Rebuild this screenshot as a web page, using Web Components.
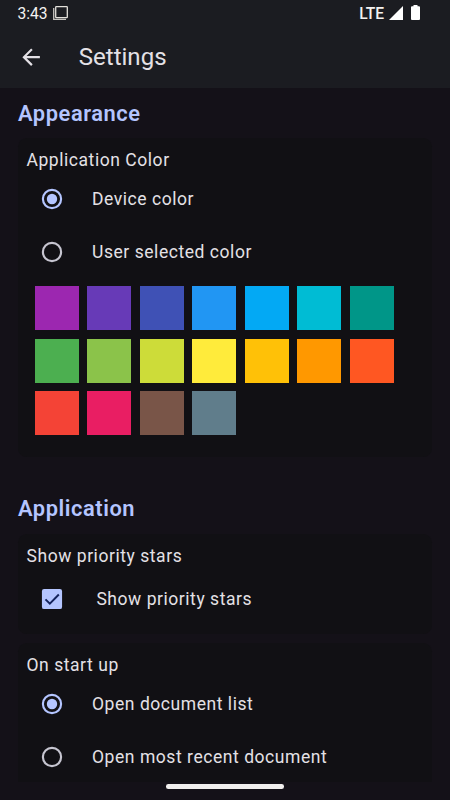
<!DOCTYPE html>
<html lang="en">
<head>
<meta charset="utf-8">
<title>Settings</title>
<style>
  body {
    margin: 0;
    background: #141118;
    color: #e4e1e6;
    font-family: Roboto, sans-serif;
    overflow: hidden;
  }
</style>
</head>
<body>
  <settings-screen>
    <status-bar slot="top" time="3:43" network="LTE"></status-bar>
    <app-bar slot="top">Settings</app-bar>

    <settings-section name="Appearance">
      <settings-card name="Application Color" style="height: 319.5px">
        <radio-option checked>Device color</radio-option>
        <radio-option>User selected color</radio-option>
        <color-palette colors="#9c27b0 #673ab7 #3f51b5 #2196f3 #03a9f4 #00bcd4 #009688 #4caf50 #8bc34a #cddc39 #ffeb3b #ffc107 #ff9800 #ff5722 #f44336 #e91e63 #795548 #607d8b"></color-palette>
      </settings-card>
    </settings-section>

    <settings-section name="Application">
      <settings-card name="Show priority stars" style="height: 100px">
        <check-option>Show priority stars</check-option>
      </settings-card>
      <settings-card name="On start up" style="height: 160px">
        <radio-option checked>Open document list</radio-option>
        <radio-option>Open most recent document</radio-option>
      </settings-card>
    </settings-section>
  </settings-screen>

<script>
// every element is a template cloned into an open shadow root
class BaseElement extends HTMLElement {
  constructor() {
    super();
    const template = document.createElement('template');
    template.innerHTML = this.constructor.markup;
    this.attachShadow({ mode: 'open' });
    this.shadowRoot.appendChild(template.content.cloneNode(true));
  }

  setText(selector, attr) {
    this.shadowRoot.querySelector(selector).textContent = this.getAttribute(attr);
  }
}

class SettingsScreen extends BaseElement {
  static markup = `
    <style>
      :host {
        display: flex;
        flex-direction: column;
        height: 800px;
      }
      header {
        height: 87.5px;
        flex: none;
        background: #1b1c21;
      }
      main {
        flex: 1;
        min-height: 0;
        overflow: hidden;
        padding: 0 18px;
      }
      footer {
        height: 18px;
        flex: none;
        display: flex;
        justify-content: center;
      }
      .handle {
        width: 118px;
        height: 4.6px;
        margin-top: 2.2px;
        border-radius: 2.3px;
        background: #f1efee;
      }
    </style>
    <header><slot name="top"></slot></header>
    <main><slot></slot></main>
    <footer><div class="handle"></div></footer>
  `;
}

class StatusBar extends BaseElement {
  static markup = `
    <style>
      :host {
        display: flex;
        align-items: center;
        height: 26px;
        padding: 0 30px 0 17.5px;
        font-size: 15.6px;
        line-height: 26px;
        color: #f4f2f0;
      }
      svg { display: block; }
      .time, .network { padding-top: 1px; }
      .app { margin: 0 0 1px 5px; }
      .network {
        margin-left: auto;
        font-weight: 500;
      }
      .signal { margin-left: 5px; }
      .battery { margin: 0 0 1px 8px; }
    </style>
    <span class="time"></span>
    <svg class="app" width="15" height="14" viewBox="0 0 15 14" fill="none">
      <path d="M.7 2v11.3H13" stroke="#c4c1bd" stroke-width="1.3"/>
      <rect x="2.7" y=".7" width="11.6" height="10.9" rx=".6" stroke="#e2dfda" stroke-width="1.3"/>
    </svg>
    <span class="network"></span>
    <svg class="signal" width="14" height="14" viewBox="0 0 14 14"><path d="M14 0v14H0z" fill="#fff"/></svg>
    <svg class="battery" width="9" height="15" viewBox="0 0 9 15">
      <path d="M2.5 0h4v1.2H8a1 1 0 0 1 1 1V14a1 1 0 0 1-1 1H1a1 1 0 0 1-1-1V2.200a1 1 0 0 1 1-1h1.500z" fill="#fff"/>
    </svg>
  `;

  connectedCallback() {
    this.setText('.time', 'time');
    this.setText('.network', 'network');
  }
}

class AppBar extends BaseElement {
  static markup = `
    <style>
      :host {
        display: flex;
        align-items: center;
        height: 61.25px;
        padding-left: 17.5px;
        font-size: 24.06px;
      }
      svg {
        display: block;
        margin-right: 35px;
      }
    </style>
    <svg width="26.25" height="26.25" viewBox="0 0 24 24" fill="#e4e1e6">
      <path d="M20 11H7.830l5.590-5.590L12 4l-8 8 8 8 1.410-1.410L7.830 13H20z"/>
    </svg>
    <slot></slot>
  `;
}

class SettingsSection extends BaseElement {
  static markup = `
    <style>
      :host {
        display: block;
        margin-bottom: 26px;
      }
      h2 {
        margin: 0 0 9.400px;
        padding-top: 10px;
        font-size: 21.875px;
        font-weight: 600;
        line-height: 31px;
        letter-spacing: .55px;
        color: #b4c5ff;
      }
      .cards {
        display: flex;
        flex-direction: column;
        gap: 9px;
      }
    </style>
    <h2></h2>
    <div class="cards"><slot></slot></div>
  `;

  connectedCallback() {
    this.setText('h2', 'name');
  }
}

class SettingsCard extends BaseElement {
  static markup = `
    <style>
      :host {
        display: block;
        box-sizing: border-box;
        padding: 8.75px 8.5px;
        border-radius: 8.75px;
        background: #111014;
        font-size: 17.5px;
        letter-spacing: .55px;
      }
      .name {
        line-height: 26.25px;
      }
    </style>
    <div class="name"></div>
    <slot></slot>
  `;

  connectedCallback() {
    this.setText('.name', 'name');
  }
}

class RadioOption extends BaseElement {
  static markup = `
    <style>
      :host {
        display: flex;
        align-items: center;
        height: 52.5px;
        padding-left: 12.9px;
        color: #e4e1e6;
      }
      svg {
        display: block;
        width: 26px;
        height: 26px;
        margin-right: 26.600px;
        color: #c6c5d0;
      }
      .dot { display: none; }
      :host([checked]) svg { color: #b4c5ff; }
      :host([checked]) .dot { display: inline; }
    </style>
    <svg viewBox="0 0 24 24">
      <circle cx="12" cy="12" r="8.400" fill="none" stroke="currentColor" stroke-width="2"/>
      <circle class="dot" cx="12" cy="12" r="4.800" fill="currentColor"/>
    </svg>
    <slot></slot>
  `;
}

class CheckOption extends BaseElement {
  static markup = `
    <style>
      :host {
        display: flex;
        align-items: center;
        height: 61.25px;
        padding-left: 12.9px;
      }
      svg {
        display: block;
        width: 26px;
        height: 26px;
        margin-right: 31px;
      }
    </style>
    <svg viewBox="0 0 24 24">
      <rect x="2.700" y="2.700" width="18.600" height="18.600" rx="2" fill="#b4c5ff"/>
      <path d="M6 12.300l4 4 8.300-8.400" fill="none" stroke="#14235c" stroke-width="1.800"/>
    </svg>
    <slot></slot>
  `;
}

class ColorPalette extends BaseElement {
  static markup = `
    <style>
      :host {
        display: grid;
        grid-template-columns: repeat(7, 44px);
        grid-auto-rows: 44px;
        gap: 8.5px;
        padding: 8.4px;
      }
    </style>
  `;

  connectedCallback() {
    this.getAttribute('colors').split(' ').forEach(color => {
      const swatch = document.createElement('div');
      swatch.style.background = color;
      this.shadowRoot.appendChild(swatch);
    });
  }
}

window.customElements.define('settings-screen', SettingsScreen);
window.customElements.define('status-bar', StatusBar);
window.customElements.define('app-bar', AppBar);
window.customElements.define('settings-section', SettingsSection);
window.customElements.define('settings-card', SettingsCard);
window.customElements.define('radio-option', RadioOption);
window.customElements.define('check-option', CheckOption);
window.customElements.define('color-palette', ColorPalette);
</script>
</body>
</html>
